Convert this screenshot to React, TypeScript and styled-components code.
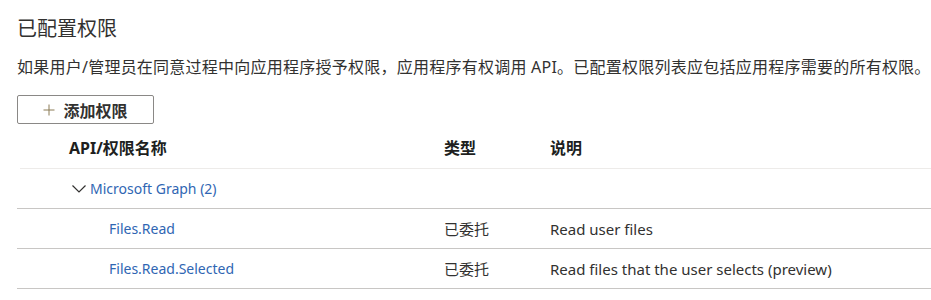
import styled, { createGlobalStyle } from 'styled-components'

const GlobalStyle = createGlobalStyle`
  body {
    margin: 0;
    background: #ffffff;
    font-family: 'Noto Sans', 'Noto Sans CJK SC', sans-serif;
    color: #323130;
  }
`

const permissions = [
  { name: 'Files.Read', type: '已委托', description: 'Read user files' },
  { name: 'Files.Read.Selected', type: '已委托', description: 'Read files that the user selects (preview)' },
]

export default function App() {
  return (
    <>
      <GlobalStyle />
      <Page>
        <Title>已配置权限</Title>
        <Description>
          如果用户/管理员在同意过程中向应用程序授予权限，应用程序有权调用 API。已配置权限列表应包括应用程序需要的所有权限。
        </Description>
        <AddButton type="button">
          <PlusIcon viewBox="0 0 12 12">
            <path d="M6 0.5V11.5M0.5 6H11.5" stroke="currentColor" strokeWidth="1" />
          </PlusIcon>
          添加权限
        </AddButton>

        <Table>
          <HeaderRow>
            <HeaderCell>API/权限名称</HeaderCell>
            <HeaderCell>类型</HeaderCell>
            <HeaderCell>说明</HeaderCell>
          </HeaderRow>
          <Row>
            <NameCell $indent={55}>
              <Chevron viewBox="0 0 14 8">
                <path d="M0.5 0.5L7 7L13.5 0.5" fill="none" stroke="currentColor" strokeWidth="1.2" />
              </Chevron>
              <Link>Microsoft Graph (2)</Link>
            </NameCell>
            <Cell />
            <Cell />
          </Row>
          {permissions.map((perm) => (
            <Row key={perm.name}>
              <NameCell $indent={92}>
                <Link>{perm.name}</Link>
              </NameCell>
              <Cell>{perm.type}</Cell>
              <Cell>{perm.description}</Cell>
            </Row>
          ))}
        </Table>
      </Page>
    </>
  )
}

const Page = styled.main`
  padding: 15px 0 0 17px;
`

const Title = styled.h2`
  margin: 0;
  font-size: 20px;
  font-weight: 400;
  line-height: 28px;
  color: #323130;
`

const Description = styled.p`
  margin: 13px 0 0;
  font-size: 16px;
  line-height: 22px;
  letter-spacing: 0.24px;
  color: #323130;
`

const AddButton = styled.button`
  margin-top: 17px;
  display: flex;
  align-items: center;
  justify-content: center;
  gap: 8px;
  width: 137px;
  height: 29px;
  padding: 0;
  border: 1px solid #8a8886;
  border-radius: 2px;
  background: #ffffff;
  font-family: 'Noto Sans', 'Noto Sans CJK SC', sans-serif;
  font-size: 16px;
  font-weight: 600;
  color: #323130;
`

const PlusIcon = styled.svg`
  width: 12px;
  height: 12px;
  color: #8a7a55;
`

const Table = styled.div`
  margin-top: 7px;
`

const HeaderRow = styled.div`
  display: grid;
  grid-template-columns: 424px 106px 1fr;
  height: 38px;
  padding-bottom: 0;
  box-sizing: border-box;
  align-items: start;
  padding-top: 6px;
  margin-left: 3px;
  border-bottom: 1px solid #edebe9;
  & > div:first-child {
    padding-left: 49px;
  }
`

const HeaderCell = styled.div`
  font-size: 16px;
  line-height: 22px;
  font-weight: 700;
  color: #201f1e;
`

const Row = styled.div`
  display: grid;
  grid-template-columns: 427px 106px 1fr;
  height: 39px;
  align-items: center;
  border-bottom: 1px solid #c8c6c4;
  font-size: 15px;
  color: #323130;
`

const Cell = styled.div``

const NameCell = styled.div<{ $indent: number }>`
  display: flex;
  align-items: center;
  gap: 4px;
  padding-left: ${({ $indent }) => $indent}px;
`

const Chevron = styled.svg`
  width: 14px;
  height: 8px;
  color: #323130;
`

const Link = styled.span`
  color: #2f66b3;
  font-size: 14px;
`
